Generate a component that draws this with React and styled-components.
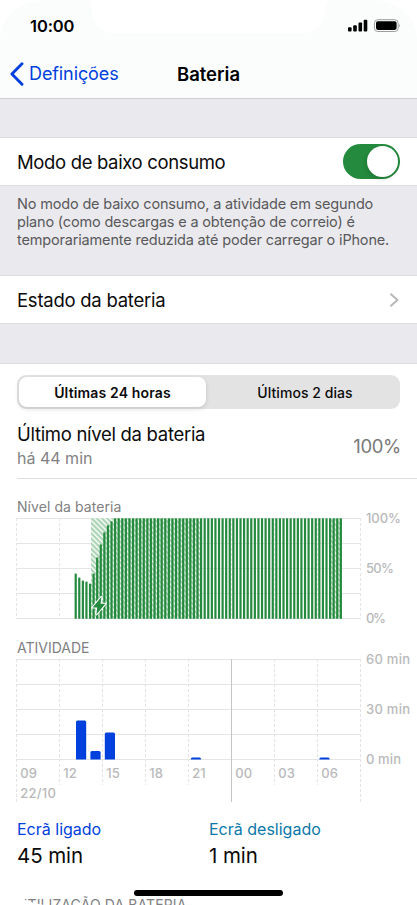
import React from "react";
import styled, { createGlobalStyle } from "styled-components";

const GlobalStyle = createGlobalStyle`
  html, body {
    margin: 0;
    padding: 0;
    background: #fff;
  }
  * {
    box-sizing: border-box;
  }
`;

// Phone screen
const Screen = styled.div`
  position: relative;
  width: 417px;
  height: 905px;
  overflow: hidden;
  background: #fff;
  color: #0b0b0b;
  font-family: "Inter", "Liberation Sans", sans-serif;
  display: flex;
  flex-direction: column;
`;

// Status bar and title
const Header = styled.header`
  position: relative;
  flex: none;
  height: 99px;
  background: #fbfdfd;
  border-bottom: 1px solid #cfced2;
`;

const NotchShape = styled.svg`
  position: absolute;
  top: 0;
  left: 0;
`;

const StatusBar = styled.div`
  position: relative;
  height: 49px;
  display: flex;
  align-items: center;
  justify-content: space-between;
  padding: 3px 16px 0 30px;
`;

const Clock = styled.span`
  font-size: 16.5px;
  font-weight: 600;
  letter-spacing: -0.1px;
  color: #000;
`;

const StatusIcons = styled.svg`
  display: block;
`;

const NavBar = styled.nav`
  position: relative;
  height: 49px;
  display: grid;
  grid-template-columns: 1fr auto 1fr;
  align-items: center;
  padding: 0 10px;
`;

const BackLink = styled.a`
  display: flex;
  align-items: center;
  gap: 5px;
  color: #0040dd;
  font-size: 18px;
  letter-spacing: -0.1px;
`;

const Title = styled.h1`
  margin: 0;
  font-size: 18.5px;
  font-weight: 600;
  letter-spacing: 0;
  color: #000;
`;

// Grey area between groups
const Gap = styled.div`
  flex: none;
  height: ${(p) => p.$height}px;
  background: #eae9ee;
  border-bottom: 1px solid #dddce0;
`;

const Row = styled.div`
  flex: none;
  height: ${(p) => p.$height}px;
  display: flex;
  align-items: center;
  justify-content: space-between;
  padding: 0 17px;
  border-bottom: 1px solid #dddce0;
`;

const RowLabel = styled.span`
  font-size: 18.5px;
  letter-spacing: ${(p) => p.$spacing || -0.3}px;
  color: #0b0b0b;
`;

const Toggle = styled.div`
  width: 57px;
  height: 35px;
  padding: 2px;
  border-radius: 18px;
  background: #248a3d;
  display: flex;
  justify-content: flex-end;
`;

const Knob = styled.div`
  width: 31px;
  height: 31px;
  border-radius: 50%;
  background: #fff;
  box-shadow: -1px 2px 4px rgba(0, 0, 0, 0.15);
`;

const Note = styled.p`
  flex: none;
  margin: 0;
  height: 90px;
  padding: 9px 17px 0;
  background: #eae9ee;
  border-bottom: 1px solid #dddce0;
  color: #59595b;
  font-size: 14.5px;
  line-height: 18px;
  letter-spacing: -0.17px;
  white-space: nowrap;
`;

// 24 hours / 2 days switch
const Segmented = styled.div`
  flex: none;
  height: 34px;
  margin: 11px 17px 0;
  padding: 2px;
  display: grid;
  grid-template-columns: 187px 1fr;
  border-radius: 9px;
  background: #e3e3e4;
`;

const Segment = styled.div`
  display: flex;
  align-items: center;
  justify-content: center;
  padding: ${(p) => (p.$active ? 0 : "0 0 0 6px")};
  border-radius: 8px;
  font-size: 14px;
  letter-spacing: ${(p) => (p.$active ? 0.15 : 0.05)}px;
  color: #0b0b0b;
  font-weight: ${(p) => (p.$active ? 600 : 500)};
  background: ${(p) => (p.$active ? "#fff" : "transparent")};
  box-shadow: ${(p) => (p.$active ? "0 2px 5px rgba(0, 0, 0, 0.12)" : "none")};
`;

const LevelRow = styled.div`
  flex: none;
  height: 70px;
  margin-left: 17px;
  padding-right: 16px;
  display: flex;
  align-items: center;
  justify-content: space-between;
  border-bottom: 1px solid #dfdfe1;
`;

const LevelText = styled.div`
  display: flex;
  flex-direction: column;
  gap: 1px;
  padding-top: 5px;
`;

const LevelAge = styled.span`
  font-size: 16px;
  line-height: 24px;
  color: #828284;
`;

const LevelValue = styled.span`
  font-size: 18.5px;
  letter-spacing: -0.3px;
  padding-top: 4px;
  color: #79797b;
`;

const ChartTitle = styled.h2`
  flex: none;
  margin: 0;
  padding: ${(p) => p.$top}px 17px 0;
  height: ${(p) => p.$height}px;
  font-size: 14px;
  font-weight: 400;
  line-height: 18px;
  letter-spacing: ${(p) => p.$spacing}px;
  color: #808082;
`;

const Chart = styled.svg`
  flex: none;
  display: block;
  font-family: inherit;

  text {
    font-size: 13px;
    font-weight: 500;
    fill: #b9b9bb;
  }
`;

const Totals = styled.div`
  flex: none;
  display: grid;
  grid-template-columns: 192px 1fr;
  padding: 15px 17px 0;
`;

const Total = styled.div`
  display: flex;
  flex-direction: column;
`;

const TotalLabel = styled.span`
  font-size: 16px;
  line-height: 25px;
  letter-spacing: 0;
  color: ${(p) => p.$color};
`;

const TotalValue = styled.span`
  font-size: 20.5px;
  line-height: 27px;
  letter-spacing: -0.1px;
`;

const SectionTitle = styled.div`
  flex: none;
  margin-top: 27px;
  padding: 0 17px;
  font-size: 14px;
  line-height: 18px;
  letter-spacing: 0.1px;
  color: #808082;
`;

const BottomCorners = styled.svg`
  position: absolute;
  left: 0;
  bottom: 0;
`;

const HomeIndicator = styled.div`
  position: absolute;
  left: 134px;
  bottom: 9px;
  width: 149px;
  height: 6px;
  border-radius: 3px;
  background: #000;
`;

const GRID_X = [16.5, 59.5, 102.5, 145.5, 188.5, 231.5, 274.5, 317.5, 360.5];
const GRID_Y = [0.5, 25.5, 50.5, 75.5, 100.5];
const HOURS = ["09", "12", "15", "18", "21", "00", "03", "06"];

// Battery level per quarter of an hour; it stays at 100 after these
const FIRST_LEVELS = [45, 41, 38, 37, 35, 45, 61, 74, 86, 93, 97];
const LEVELS = Array.from({ length: 75 }, (_, i) => FIRST_LEVELS[i] || 100);

const ACTIVITY = [
  { x: 76, height: 39 },
  { x: 90.4, height: 8.5 },
  { x: 104.8, height: 27 },
  { x: 190.8, height: 2 },
  { x: 319.4, height: 2 },
];

const HorizontalLines = () =>
  GRID_Y.map((y) => (
    <line key={y} x1="16.5" x2="360.5" y1={y} y2={y} stroke="#e5e5e6" />
  ));

const LevelChart = () => (
  <Chart width="417" height="124" viewBox="0 -8 417 124">
    <defs>
      <pattern id="hatch" width="3.65" height="3.65" patternUnits="userSpaceOnUse" patternTransform="rotate(45)">
        <rect width="3.65" height="3.65" fill="#fff" />
        <rect width="3.65" height="2.3" fill="#abd4b5" />
      </pattern>
    </defs>
    <HorizontalLines />
    {GRID_X.map((x) => (
      <line key={x} x1={x} x2={x} y1="0" y2="101" stroke="#e5e5e6" strokeDasharray="3 2" />
    ))}
    <rect x="91" y="0.3" width="109" height="100.5" fill="url(#hatch)" />
    <rect x="330" y="0.3" width="11.8" height="100.5" fill="url(#hatch)" />
    {LEVELS.map((level, i) => (
      <rect key={i} x={74.6 + i * 3.583} y={100.8 - level * 1.005} width="2.2" height={level * 1.005} fill="#248a3d" />
    ))}
    <path
      d="M101.4 79 L92.6 89.4 H97.2 L96.4 96.4 L105.4 85.8 H100.6 Z"
      fill="#248a3d"
      stroke="#fff"
      strokeWidth="2.2"
      strokeLinejoin="round"
      paintOrder="stroke"
    />
    <text x="366" y="5.3" textLength="35">100%</text>
    <text x="366" y="55.3" textLength="28">50%</text>
    <text x="366" y="105.3" textLength="20">0%</text>
  </Chart>
);

const ActivityChart = () => (
  <Chart width="417" height="151" viewBox="0 -8 417 151">
    <HorizontalLines />
    {GRID_X.map((x, i) => (
      <line
        key={x}
        x1={x}
        x2={x}
        y1="0"
        y2={i === 0 || i === 5 || i === 8 ? 143.5 : 126}
        stroke={i === 5 ? "#c6c6c8" : "#e3e3e5"}
        strokeDasharray={i === 5 ? "none" : "3 2"}
      />
    ))}
    {ACTIVITY.map((bar) => (
      <path
        key={bar.x}
        d={`M${bar.x} 100.5 v${1.5 - bar.height} q0 -1.5 1.5 -1.5 h7.2 q1.5 0 1.5 1.5 v${bar.height - 1.5} z`}
        fill="#0040dd"
      />
    ))}
    {HOURS.map((hour, i) => (
      <text key={hour} x={GRID_X[i] + 3.8} y="118.5">{hour}</text>
    ))}
    <text x="20.3" y="139" textLength="35.5">22/10</text>
    <text x="366" y="5.3" textLength="44">60 min</text>
    <text x="366" y="55.3" textLength="44">30 min</text>
    <text x="366" y="105.3" textLength="35">0 min</text>
  </Chart>
);

const App = () => {
  return (
    <>
      <GlobalStyle />
      <Screen>
        <Header>
          <NotchShape width="417" height="40" viewBox="0 0 417 40">
            <path
              d="M0 0 H42 C18 2 2 16 0 38 Z M417 0 H375 C399 2 415 16 417 38 Z M88 0 Q91 1 91.5 9 Q93 33 116 33.3 H301 Q324 33 325.5 9 Q326 1 329 0 Z"
              fill="#fff"
            />
          </NotchShape>
          <StatusBar>
            <Clock>10:00</Clock>
            <StatusIcons width="53" height="14" viewBox="0 0 53 14">
              <rect x="0" y="8.3" width="3.6" height="4.2" rx="1" />
              <rect x="5.2" y="6.2" width="3.6" height="6.3" rx="1" />
              <rect x="10.5" y="3.6" width="3.6" height="8.9" rx="1" />
              <rect x="15.7" y="0.8" width="3.6" height="11.7" rx="1" />
              <rect x="26.4" y="0.7" width="23.8" height="11.8" rx="3.4" fill="none" stroke="#9c9c9c" />
              <rect x="28" y="2.3" width="20.6" height="8.6" rx="1.8" />
              <path d="M51.2 4.7 q1.8 1.9 0 3.8z" fill="#9c9c9c" />
            </StatusIcons>
          </StatusBar>
          <NavBar>
            <BackLink>
              <svg width="14" height="24" viewBox="0 0 14 24">
                <path d="M12 1.8 L1.9 12 L12 22.2" fill="none" stroke="#0040dd" strokeWidth="2.9" strokeLinecap="round" strokeLinejoin="round" />
              </svg>
              Definições
            </BackLink>
            <Title>Bateria</Title>
          </NavBar>
        </Header>

        <Gap $height={39} />
        <Row $height={48}>
          <RowLabel $spacing={-0.35}>Modo de baixo consumo</RowLabel>
          <Toggle>
            <Knob />
          </Toggle>
        </Row>
        <Note>
          No modo de baixo consumo, a atividade em segundo
          <br />
          plano (como descargas e a obtenção de correio) é
          <br />
          temporariamente reduzida até poder carregar o iPhone.
        </Note>
        <Row $height={48}>
          <RowLabel $spacing={-0.25}>Estado da bateria</RowLabel>
          <svg width="12" height="16" viewBox="0 0 12 16">
            <path d="M3 2.2 L9.5 8 L3 13.8" fill="none" stroke="#b8b8bb" strokeWidth="2" strokeLinecap="round" strokeLinejoin="round" />
          </svg>
        </Row>
        <Gap $height={40} />

        <Segmented>
          <Segment $active>Últimas 24 horas</Segment>
          <Segment>Últimos 2 dias</Segment>
        </Segmented>
        <LevelRow>
          <LevelText>
            <RowLabel>Último nível da bateria</RowLabel>
            <LevelAge>há 44 min</LevelAge>
          </LevelText>
          <LevelValue>100%</LevelValue>
        </LevelRow>

        <ChartTitle $top={19} $height={31} $spacing={0.07}>Nível da bateria</ChartTitle>
        <LevelChart />
        <ChartTitle $top={5} $height={17} $spacing={0}>ATIVIDADE</ChartTitle>
        <ActivityChart />

        {/* Screen time totals */}
        <Totals>
          <Total>
            <TotalLabel $color="#0040dd">Ecrã ligado</TotalLabel>
            <TotalValue>45 min</TotalValue>
          </Total>
          <Total>
            <TotalLabel $color="#0a78a9">Ecrã desligado</TotalLabel>
            <TotalValue>1 min</TotalValue>
          </Total>
        </Totals>
        <SectionTitle>UTILIZAÇÃO DA BATERIA</SectionTitle>

        <BottomCorners width="417" height="44" viewBox="0 0 417 44">
          <path d="M0 0 Q3 39 44 44 H0 Z M417 0 Q414 39 373 44 H417 Z" fill="#fff" />
        </BottomCorners>
        <HomeIndicator />
      </Screen>
    </>
  );
};

export default App;
